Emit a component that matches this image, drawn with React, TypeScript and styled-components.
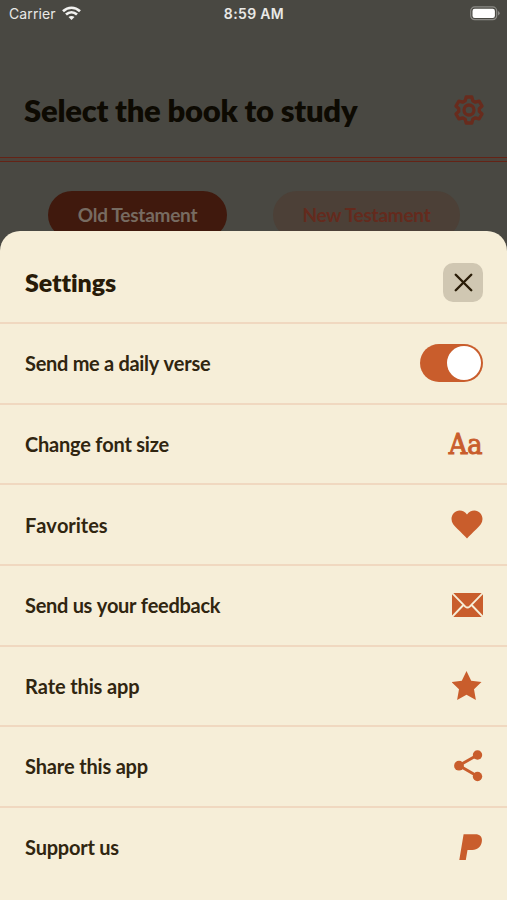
import React from "react";
import styled, { createGlobalStyle } from "styled-components";
import { X } from "lucide-react";

const ACCENT = "#c95d2c";

const GlobalStyle = createGlobalStyle`
  *, *::before, *::after { box-sizing: border-box; }
  body { margin: 0; background: #494842; }
  button { border: 0; padding: 0; font: inherit; }
`;

const Screen = styled.div`
  position: relative;
  display: flex;
  flex-direction: column;
  width: 507px;
  height: 900px;
  overflow: hidden;
  background: #494842;
  font-family: Lato, sans-serif;
  font-variant-ligatures: none;
`;

const StatusBar = styled.div`
  display: grid;
  grid-template-columns: 1fr auto 1fr;
  align-items: center;
  height: 28px;
  padding: 0 7px 1px 9px;
  color: #e9e9e7;
  font-family: Inter, sans-serif;
  font-size: 14px;
`;

const Carrier = styled.div`
  display: flex;
  align-items: center;
  gap: 6px;
  letter-spacing: 0.1px;
`;

const Clock = styled.div`
  padding-right: 1px;
  font-weight: 600;
  letter-spacing: 0.35px;
`;

const Power = styled.div`
  display: flex;
  justify-content: flex-end;
`;

const Header = styled.header`
  display: flex;
  align-items: center;
  justify-content: space-between;
  height: 129px;
  padding: 34px 22px 0 24px;
`;

const Title = styled.h1`
  margin: 0;
  color: #0d0a02;
  font-size: 31px;
  font-weight: 800;
  line-height: 40px;
  letter-spacing: -0.25px;
`;

const DoubleRule = styled.div`
  height: 5px;
  border-top: 1px solid #642316;
  border-bottom: 1px solid #642316;
  background: #4d433b;
`;

const Tabs = styled.div`
  display: flex;
  gap: 46px;
  padding: 29px 47px 0 48px;
`;

const Tab = styled.button<{ $active?: boolean }>`
  width: ${(p) => (p.$active ? 179 : 187)}px;
  height: 48px;
  padding-bottom: 2px;
  border-radius: 24px;
  background: ${(p) => (p.$active ? "#40190d" : "#4c4037")};
  color: ${(p) => (p.$active ? "#776b61" : "#642a1d")};
  font-size: 19px;
  font-weight: 700;
  letter-spacing: -0.25px;
`;

const Sheet = styled.section`
  position: absolute;
  inset: 231px 0 0;
  border-radius: 20px 20px 0 0;
  background: #f6eed8;
  color: #2f2411;
`;

const SheetHeader = styled.div`
  display: flex;
  align-items: center;
  justify-content: space-between;
  height: 91px;
  padding: 12px 24px 0 25px;
`;

const SheetTitle = styled.h2`
  margin: 0;
  padding-bottom: 2px;
  color: #281b08;
  font-size: 25px;
  font-weight: 800;
  letter-spacing: -0.1px;
`;

const CloseButton = styled.button`
  display: flex;
  align-items: center;
  justify-content: center;
  width: 40px;
  height: 39px;
  border-radius: 10px;
  background: #d0c7b2;
  color: #2a1d08;
`;

const Row = styled.div`
  display: flex;
  align-items: center;
  justify-content: space-between;
  height: 80.64px;
  padding: 0 24px 0 25px;
  border-top: 2px solid #f0d8c0;
  color: #302510;
  font-size: 20px;
  font-weight: 700;

  svg { display: block; }
`;

const Label = styled.span<{ $tracking?: number }>`
  font-kerning: none;
  letter-spacing: ${(p) => p.$tracking ?? -0.25}px;
`;

const Switch = styled.div`
  display: flex;
  justify-content: flex-end;
  width: 63px;
  height: 38px;
  padding: 2px;
  border-radius: 19px;
  background: ${ACCENT};
`;

const Knob = styled.div`
  width: 34px;
  height: 34px;
  border-radius: 50%;
  background: #fff;
`;

const FontSample = styled.span`
  padding-top: 2px;
  color: ${ACCENT};
  font-family: "DejaVu Serif", serif;
  font-size: 27px;
  font-weight: 400;
  -webkit-text-stroke: 1px ${ACCENT};
  transform: scaleX(0.95);
  transform-origin: right;
`;

const GearIcon = () => (
  <svg width="32" height="32" viewBox="0 0 32 32" fill="none" stroke="#682b1d" strokeWidth="3.3" strokeLinejoin="round">
    <path d="M13.200 3h5.600l1 3.700 2.600 1.500 3.700-1.100 2.900 4.900-2.700 2.600v2.800l2.700 2.600-2.900 4.900-3.700-1.100-2.600 1.500-1 3.700h-5.600l-1-3.700-2.600-1.500-3.700 1.100L3 20l2.700-2.600v-2.800L3 12l2.900-4.900 3.700 1.100 2.600-1.500z" />
    <circle cx="16" cy="16" r="5" />
  </svg>
);

const WifiIcon = () => (
  <svg width="19" height="15" viewBox="0 0 19 15">
    <g fill="none" stroke="#f2f2f0" strokeWidth="2.7">
      <path d="M1 5.200C6 .6 13 .6 18 5.200" />
      <path d="M4 8.600c3.300-3 7.700-3 11 0" />
    </g>
    <path d="M6.500 11c1.800-1.500 4.200-1.500 6 0l-3 3z" fill="#f2f2f0" />
  </svg>
);

const BatteryIcon = () => (
  <svg width="30" height="15" viewBox="0 0 30 15">
    <rect x="0.7" y="0.9" width="26" height="12.8" rx="4" fill="none" stroke="#8b8a86" strokeWidth="1.2" />
    <rect x="2.5" y="2.7" width="22.4" height="9.2" rx="2.2" fill="#fff" />
    <path d="M28 5v4.600q1.700-.8 1.700-2.300T28 5z" fill="#8b8a86" />
  </svg>
);

const HeartIcon = () => (
  <svg width="32" height="30" viewBox="0 0 32 30" fill={ACCENT}>
    <path d="M16 28.500C14 26 10 22.500 6.500 19 3 15.500.5 12.700.5 8.900.5 4.300 4.200.5 8.600.5c3 0 5.600 1.500 7.400 4 1.800-2.500 4.400-4 7.400-4 4.400 0 8.100 3.800 8.100 8.400 0 3.800-2.500 6.600-6 10.100-3.500 3.500-7.500 7-9.500 9.500z" />
  </svg>
);

const MailIcon = () => (
  <svg width="31" height="24" viewBox="0 0 31 24">
    <path fill={ACCENT} d="M0 0h31v24H0z" />
    <path d="M0 0l13.300 13.600q2.200 2 4.400 0L31 0M0 24l11.400-12M31 24L19.600 12" fill="none" stroke="#f6eed8" strokeWidth="1.9" />
  </svg>
);

const StarIcon = () => (
  <svg width="31" height="30" viewBox="0 0 31 30" fill={ACCENT}>
    <path d="M14.500 0l4.700 9.800 10.300 1.300-7.500 7.200 1.900 10.600-9.400-5.100-9.400 5.100L7 18.300-.5 11.100l10.300-1.300z" />
  </svg>
);

const ShareIcon = () => (
  <svg width="29" height="32" viewBox="0 0 29 32">
    <path d="M23.500 5L5 15.500l18.500 10.800" fill="none" stroke={ACCENT} strokeWidth="2.9" />
    <g fill={ACCENT}>
      <circle cx="23.5" cy="5" r="4.7" />
      <circle cx="5" cy="15.7" r="4.9" />
      <circle cx="23.5" cy="26.5" r="4.7" />
    </g>
  </svg>
);

const PaypalIcon = () => (
  <svg width="24" height="28" viewBox="0 0 24 28">
    <path d="M4.600 1.200h11.800c4.300 0 7 2.700 6.500 6.800-.5 5.500-4.300 8.900-9.500 8.900H8.500L6.800 27H.3z" fill={ACCENT} />
  </svg>
);

const items: { label: string; tracking?: number; control: React.ReactNode }[] = [
  { label: "Send me a daily verse", tracking: -0.3, control: <Switch role="switch" aria-checked="true"><Knob /></Switch> },
  { label: "Change font size", control: <FontSample>Aa</FontSample> },
  { label: "Favorites", tracking: -0.05, control: <HeartIcon /> },
  { label: "Send us your feedback", tracking: -0.3, control: <MailIcon /> },
  { label: "Rate this app", tracking: -0.15, control: <StarIcon /> },
  { label: "Share this app", tracking: -0.2, control: <ShareIcon /> },
  { label: "Support us", control: <PaypalIcon /> },
];

export default function App() {
  return (
    <>
      <GlobalStyle />
      <Screen>
        <StatusBar>
          <Carrier>Carrier <WifiIcon /></Carrier>
          <Clock>8:59 AM</Clock>
          <Power><BatteryIcon /></Power>
        </StatusBar>
        <Header>
          <Title>Select the book to study</Title>
          <GearIcon />
        </Header>
        <DoubleRule />
        <Tabs>
          <Tab $active>Old Testament</Tab>
          <Tab>New Testament</Tab>
        </Tabs>
        <Sheet>
          <SheetHeader>
            <SheetTitle>Settings</SheetTitle>
            <CloseButton aria-label="Close"><X size={31} strokeWidth={1.9} /></CloseButton>
          </SheetHeader>
          {items.map((item) => (
            <Row key={item.label}>
              <Label $tracking={item.tracking}>{item.label}</Label>
              {item.control}
            </Row>
          ))}
        </Sheet>
      </Screen>
    </>
  );
}
